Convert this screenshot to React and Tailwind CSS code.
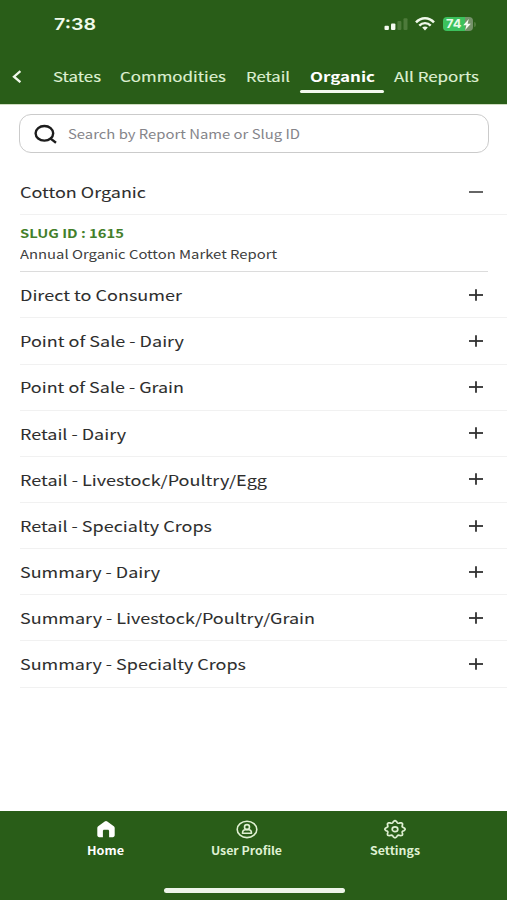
import { useLayoutEffect, useRef, useState } from "react";

// A label stretched horizontally to fill a fixed width.
function Label({ width, className = "", children }) {
  const ref = useRef(null);
  const [scale, setScale] = useState(1);
  useLayoutEffect(() => {
    setScale(width / ref.current.getBoundingClientRect().width);
  }, [width]);
  return (
    <span className="inline-flex shrink-0 whitespace-nowrap" style={{ width }}>
      <span
        ref={ref}
        className={"inline-block shrink-0 origin-left " + className}
        style={{ transform: `scaleX(${scale})` }}
      >
        {children}
      </span>
    </span>
  );
}

const tabs = [
  { name: "States", width: 48, box: "ml-[31px]" },
  { name: "Commodities", width: 106, box: "ml-[19px]" },
  { name: "Retail", width: 44, box: "ml-[20px]" },
  { name: "Organic", width: 65, box: "ml-[10px]", active: true },
  { name: "All Reports", width: 85, box: "ml-[10px]" },
];

const groups = [
  { name: "Direct to Consumer", width: 162 },
  { name: "Point of Sale - Dairy", width: 164 },
  { name: "Point of Sale - Grain", width: 164 },
  { name: "Retail - Dairy", width: 106 },
  { name: "Retail - Livestock/Poultry/Egg", width: 247 },
  { name: "Retail - Specialty Crops", width: 192 },
  { name: "Summary - Dairy", width: 140 },
  { name: "Summary - Livestock/Poultry/Grain", width: 295 },
  { name: "Summary - Specialty Crops", width: 226 },
];

// Eight-toothed outline, wider than it is tall.
const gearPoints = Array.from({ length: 96 }, (_, i) => {
  const a = (i / 96) * 2 * Math.PI;
  const r = 8 + 1.05 * Math.cos(8 * a);
  return `${(11 + 1.12 * r * Math.cos(a)).toFixed(2)},${(10.2 + 0.94 * r * Math.sin(a)).toFixed(2)}`;
}).join(" ");

function StatusBar() {
  return (
    <div className="flex h-12 items-center pl-[54px] pr-[31px]">
      <Label width={42} className="font-['Inter'] text-[16.5px] font-semibold leading-5 text-[#f0faea]">7:38</Label>
      <svg className="ml-auto" width="24" height="14" viewBox="0 0 24 14">
        <rect x="0.5" y="8.7" width="4.4" height="4.3" rx="1" fill="#f4faf0" />
        <rect x="7" y="6.5" width="4.4" height="6.5" rx="1" fill="#f4faf0" />
        <rect x="13.4" y="4" width="4" height="9" rx="1" fill="#4d7a3a" />
        <rect x="19.5" y="1.3" width="4" height="11.7" rx="1" fill="#4d7a3a" />
      </svg>
      <svg className="ml-[7px]" width="20" height="14" viewBox="0 0 20 14" fill="none" stroke="#f0f8ea" strokeWidth="2.4">
        <path d="M1 5.4C6-0.2 14-0.2 19 5.4" />
        <path d="M4.3 8.6C7.5 5.3 12.5 5.3 15.7 8.6" />
        <path d="M7.2 10.6C8.8 9.1 11.2 9.1 12.8 10.6L10 13.4Z" fill="#f0f8ea" stroke="none" />
      </svg>
      <div className="ml-2 flex h-[14px] w-[30px] items-center rounded-[4px] bg-[linear-gradient(90deg,#3cc15d_0_75%,#75916a_75%)] pl-[3px]">
        <Label width={15.5} className="font-['Inter'] text-[11.5px] font-bold leading-[14px] text-[#e9fbe9]">74</Label>
        <svg className="ml-px" width="8" height="11" viewBox="0 0 8 11" fill="#f4fbf1">
          <path d="M5.8 0L0.2 6.2H3.4L2.2 11L7.8 4.8H4.6Z" />
        </svg>
      </div>
      <div className="ml-px h-[5px] w-[2px] rounded-r bg-[#4d7a3a]" />
    </div>
  );
}

function Sign({ open }) {
  return (
    <svg width="14" height="12" viewBox="0 0 14 12" stroke={open ? "#555" : "#303030"} fill="none">
      <path d="M0 6H14" strokeWidth="1.8" />
      {!open && <path d="M7 0.3V11.7" strokeWidth="1.8" />}
    </svg>
  );
}

function Row({ name, width, open }) {
  return (
    <div className="ml-5 flex h-[46.15px] items-center justify-between border-b border-[#f1f1f1] pr-[24px]">
      <Label width={width} className="pt-[0.5px] text-[14.5px] leading-5 [-webkit-text-stroke:0.06px]">{name}</Label>
      <Sign open={open} />
    </div>
  );
}

function HomeIcon() {
  return (
    <svg width="22" height="20" viewBox="0 0 22 20" fill="#fff">
      <path d="M11 1.900c.5 0 .9.2 1.300.5l6.500 4.900c.6.4.9 1 .9 1.700v7.300c0 1.100-.8 1.900-1.900 1.900h-3.700v-6c0-.8-.5-1.400-1.300-1.400H9.200c-.8 0-1.300.6-1.300 1.400v6H4.200c-1.100 0-1.900-.8-1.900-1.900V9c0-.7.3-1.300.9-1.700l6.500-4.900c.4-.3.8-.5 1.300-.5Z" />
    </svg>
  );
}

function ProfileIcon() {
  return (
    <svg width="22" height="20" viewBox="0 0 22 20" fill="none" stroke="#dff0d2" strokeWidth="1.6">
      <ellipse cx="11" cy="10.4" rx="9.8" ry="8.2" />
      <ellipse cx="11" cy="8" rx="2.5" ry="2.4" />
      <path d="M6.5 14.3c0-2.2 1.2-3.5 2.9-3.5h3.2c1.7 0 2.9 1.3 2.9 3.5Z" strokeLinejoin="round" />
    </svg>
  );
}

function GearIcon() {
  return (
    <svg width="22" height="20" viewBox="0 0 22 20" fill="none" stroke="#dff0d2" strokeWidth="1.7" strokeLinejoin="round">
      <polygon points={gearPoints} />
      <ellipse cx="11" cy="10.2" rx="2.8" ry="2.4" />
    </svg>
  );
}

function NavItem({ name, width, icon, color, className }) {
  return (
    <div className={"flex flex-col items-center " + className}>
      {icon}
      <Label width={width} className={"pt-px text-[11px] font-bold leading-5 " + color}>{name}</Label>
    </div>
  );
}

export default function App() {
  return (
    <div className="flex h-[900px] w-[507px] flex-col overflow-hidden bg-white font-['Noto_Sans_CJK_SC','Noto_Sans',sans-serif] text-[#2e2e2e]">
      <header className="h-[105px] shrink-0 border-b border-[#cfdcc0] bg-[#295d18]">
        <StatusBar />
        <nav className="flex h-[45px] items-start pl-3 pt-[14px] text-[#deefd2]">
          <svg className="mt-[8px]" width="10" height="13" viewBox="0 0 10 13" fill="none" stroke="#f0f8ea" strokeWidth="2.3">
            <path d="M8.4 1.2L2 6.7L8.4 12.2" />
          </svg>
          {tabs.map((t) => (
            <div
              key={t.name}
              className={
                t.box +
                (t.active ? " flex h-[31px] w-[84px] flex-col items-center justify-between text-white" : "")
              }
            >
              <Label
                width={t.width}
                className={
                  "pt-px text-[13.5px] leading-[26px] " +
                  (t.active ? "font-bold" : "[-webkit-text-stroke:0.15px]")
                }
              >
                {t.name}
              </Label>
              {t.active && <div className="h-[3px] w-full shrink-0 rounded-full bg-[#f3f9ef]" />}
            </div>
          ))}
        </nav>
      </header>

      <main className="flex-1">
        <div className="ml-[19px] mt-[9px] flex h-[39px] w-[470px] items-center rounded-[12px] border-[1.5px] border-[#cbcbcb] pl-[14px]">
          <svg width="24" height="20" viewBox="0 0 24 20" fill="none" stroke="#1c1c1c" strokeWidth="2.4">
            <ellipse cx="10.4" cy="9.3" rx="8.8" ry="7.3" />
            <path d="M16.3 14.4L22 18.8" />
          </svg>
          <div className="ml-[10px] flex">
            <Label width={232} className="pt-px text-[12.5px] leading-5 text-[#85858a]">
              Search by Report Name or Slug ID
            </Label>
          </div>
        </div>

        <div className="mt-[16.2px]">
          <Row name="Cotton Organic" width={126} open />
          <div className="ml-5 mr-[19px] flex h-[57px] flex-col border-b border-[#dcdcdc] pt-[7px]">
            <Label width={104} className="text-[12px] font-bold leading-[21px] text-[#447f2b]">SLUG ID : 1615</Label>
            <Label width={257} className="pt-px text-[12.3px] leading-[21px] text-[#404040]">
              Annual Organic Cotton Market Report
            </Label>
          </div>
          {groups.map((g) => (
            <Row key={g.name} {...g} />
          ))}
        </div>
      </main>

      <footer className="flex h-[89px] shrink-0 flex-col bg-[#295d18]">
        <div className="flex pt-2">
          <NavItem name="Home" width={37} icon={<HomeIcon />} color="text-white" className="ml-[87px]" />
          <NavItem name="User Profile" width={71} icon={<ProfileIcon />} color="text-[#dff0d2]" className="ml-[87px]" />
          <NavItem name="Settings" width={50} icon={<GearIcon />} color="text-[#dff0d2]" className="ml-[88px]" />
        </div>
        <div className="ml-[164px] mt-[28px] h-[5px] w-[181px] rounded-full bg-[#edf4e9]" />
      </footer>
    </div>
  );
}
